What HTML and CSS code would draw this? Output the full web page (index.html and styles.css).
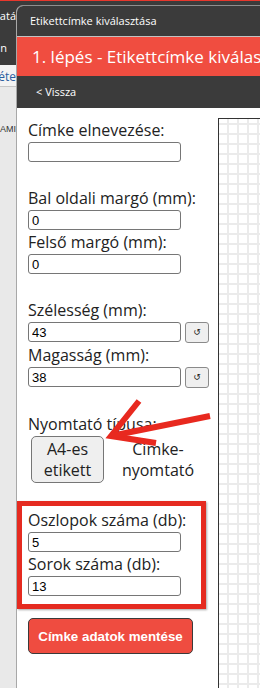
FILE: index.html
```html
<!DOCTYPE html>
<html lang="hu">
<head>
<meta charset="utf-8">
<title>Etikettcímke kiválasztása</title>
<link rel="stylesheet" href="styles.css">
</head>
<body>
<div class="page">
  <header class="site-head">
    <div class="clip row1"><span>Adatá</span></div>
    <div class="clip row2"><span class="gapped">Admin</span></div>
  </header>
  <nav class="site-nav">
    <div class="clip"><span class="nav-link">Beállítások éte</span></div>
  </nav>
  <main class="site-main">
    <div class="clip"><span class="small">PROGRAMI</span></div>
  </main>
</div>

<section class="modal">
  <div class="m-head">Etikettcímke kiválasztása</div>
  <div class="m-step">1. lépés - Etikettcímke kiválasztása</div>
  <div class="m-back">&lt; Vissza</div>
  <div class="m-body">
    <form class="form">
      <div class="group">
        <label class="lbl">Címke elnevezése:</label>
        <input class="inp" type="text" value="">
      </div>
      <div class="group">
        <label class="lbl">Bal oldali margó (mm):</label>
        <input class="inp" type="text" value="0">
        <label class="lbl">Felső margó (mm):</label>
        <input class="inp" type="text" value="0">
      </div>
      <div class="group">
        <label class="lbl">Szélesség (mm):</label>
        <div class="inrow">
          <input class="inp" type="text" value="43">
          <button class="reset" type="button">↺</button>
        </div>
        <label class="lbl">Magasság (mm):</label>
        <div class="inrow">
          <input class="inp" type="text" value="38">
          <button class="reset" type="button">↺</button>
        </div>
      </div>
      <div class="group">
        <label class="lbl">Nyomtató típusa:</label>
        <div class="types">
          <button class="type sel" type="button">A4-es<br>etikett</button>
          <button class="type plain" type="button">Címke-<br>nyomtató</button>
        </div>
      </div>
      <div class="highlight">
        <label class="lbl">Oszlopok száma (db):</label>
        <input class="inp" type="text" value="5">
        <label class="lbl">Sorok száma (db):</label>
        <input class="inp" type="text" value="13">
      </div>
      <button class="save" type="button">Címke adatok mentése</button>
    </form>
    <div class="canvas"></div>
  </div>
</section>

<svg class="arrow" width="260" height="688" viewBox="0 0 260 688" aria-hidden="true">
  <polyline points="139,401 111,436 156,443" fill="none" stroke="#e8291f" stroke-width="6" stroke-linejoin="miter" stroke-linecap="butt"/>
  <line x1="111" y1="436" x2="210" y2="416" stroke="#e8291f" stroke-width="6"/>
</svg>
</body>
</html>
```

FILE: styles.css
```css
* { box-sizing: border-box; }
html, body { margin: 0; padding: 0; }
body {
  width: 260px;
  height: 688px;
  overflow: hidden;
  position: relative;
  font-family: "Open Sans", "Noto Sans", sans-serif;
  background: #e9e9e9;
}

/* page underneath the dialog */
.page { height: 688px; display: flex; flex-direction: column; }
.clip {
  width: 16px;
  overflow: hidden;
  display: flex;
  justify-content: flex-end;
  white-space: nowrap;
}
.site-head {
  height: 65px;
  background: #3b3b3b;
  border-top: 1px solid #e8372c;
  color: #fff;
  font-size: 11px;
  line-height: 15px;
}
.row1 { padding-top: 7px; }
.row2 { margin-top: 17px; }
.gapped { margin-right: 9px; }
.site-nav {
  height: 22px;
  background: #f3f3f3;
  border-bottom: 1px solid #c6c6c6;
  padding-top: 4px;
  font-size: 12px;
  line-height: 16px;
}
.nav-link { color: #2a5d9f; }
.site-main {
  flex: 1;
  background: #e9e9e9;
  padding-top: 36px;
}
.small {
  font-family: "Liberation Sans", Arial, sans-serif;
  font-size: 9px;
  line-height: 12px;
  color: #333;
}

/* dialog */
.modal {
  position: absolute;
  left: 16px;
  top: 5px;
  right: 0;
  bottom: 0;
  background: #fff;
  border-top: 1px solid #8e8e8e;
  border-left: 1px solid #a8a8a8;
  border-top-left-radius: 7px;
  overflow: hidden;
  display: flex;
  flex-direction: column;
}
.m-head {
  height: 31px;
  background: #3b3b3b;
  border-bottom: 1px solid #c2c2c2;
  color: #fff;
  font-size: 11px;
  line-height: 30px;
  padding-left: 13px;
  white-space: nowrap;
}
.m-step {
  height: 39px;
  background: #f04d40;
  color: #fff;
  font-size: 17px;
  line-height: 39px;
  padding-left: 15px;
  white-space: nowrap;
  overflow: hidden;
}
.m-back {
  height: 32px;
  background: #3b3b3b;
  color: #fff;
  font-size: 11px;
  line-height: 32px;
  padding-left: 19px;
}
.m-body {
  flex: 1;
  display: flex;
}
.form {
  width: 201px;
  flex: none;
  padding: 10px 0 0 11px;
  margin: 0;
}
.group + .group { margin-top: 24px; }
.lbl {
  display: block;
  font-size: 16px;
  line-height: 24px;
  color: #222;
}
.inp {
  display: block;
  width: 153px;
  height: 20px;
  margin: 0;
  border: 1px solid #767676;
  border-radius: 3px;
  padding: 0 3px;
  font-family: "Liberation Sans", Arial, sans-serif;
  font-size: 13px;
  color: #000;
  background: #fff;
}
.inrow { display: flex; gap: 4px; align-items: flex-start; }
.reset {
  width: 24px;
  height: 21px;
  margin: 0;
  padding: 0;
  border: 1px solid #8a8a8a;
  border-radius: 3px;
  background: #efefef;
  font-family: "DejaVu Sans", sans-serif;
  font-size: 9px;
  color: #222;
  line-height: 19px;
}
.types { display: flex; gap: 8px; padding-left: 3px; }
.type {
  margin: 0;
  padding: 1.5px 0;
  font-family: "Open Sans", sans-serif;
  font-size: 16px;
  line-height: 21px;
  color: #222;
  text-align: center;
}
.sel {
  width: 73px;
  height: 47px;
  border: 1px solid #767676;
  border-radius: 5px;
  background: #efefef;
}
.plain {
  width: 92px;
  height: 47px;
  border: 1px solid transparent;
  background: transparent;
}
.highlight {
  margin: 18px 0 0 -11px;
  width: 189px;
  border: 5px solid #e52b20;
  padding: 2px 0 8px 6px;
  box-shadow: 1px 1px 2px rgba(0,0,0,0.35);
}
.save {
  display: block;
  margin-top: 9px;
  width: 165px;
  height: 36px;
  padding: 0;
  background: #ef4c40;
  border: 1px solid #3a3a3a;
  border-radius: 5px;
  color: #fff;
  font-family: "Liberation Sans", Arial, sans-serif;
  font-weight: bold;
  font-size: 13.33px;
}
.canvas {
  flex: 1;
  margin-top: 10px;
  border-top: 1px solid #333;
  border-left: 1px solid #333;
  background-color: #fff;
  background-image:
    linear-gradient(#ebebeb 2px, transparent 2px),
    linear-gradient(90deg, #ebebeb 2px, transparent 2px);
  background-size: 10px 10px;
  background-position: 8px 4px;
}

/* annotation arrow over the page */
.arrow {
  position: absolute;
  left: 0;
  top: 0;
  pointer-events: none;
}
```
